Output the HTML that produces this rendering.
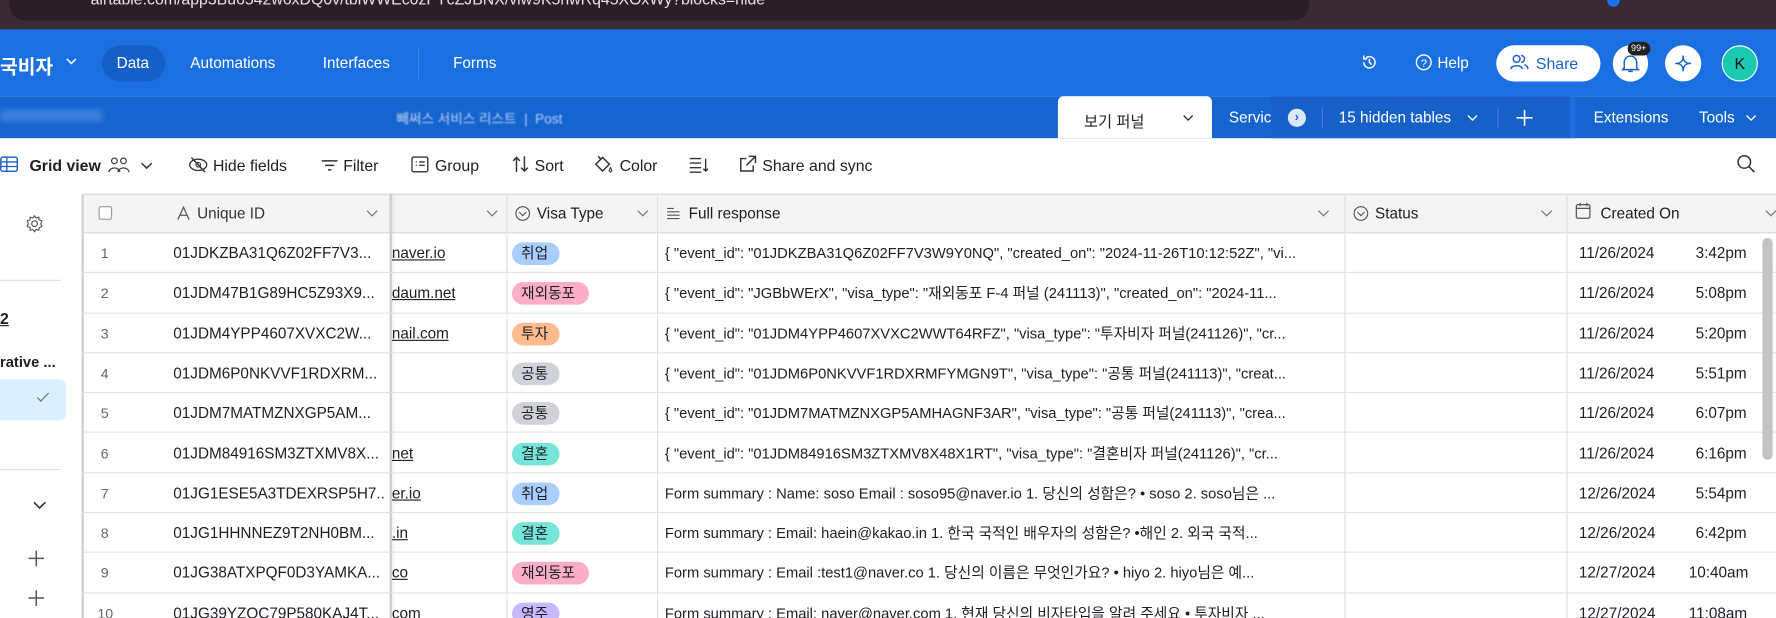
<!DOCTYPE html>
<html><head><meta charset="utf-8"><style>
*{box-sizing:border-box;margin:0;padding:0}
html,body{width:1776px;height:618px;overflow:hidden;background:#fff}
#wrap{position:absolute;left:0;top:0;width:1568px;height:546px;overflow:hidden;transform:scale(1.13266);transform-origin:0 0;font-family:"Liberation Sans","Noto Sans CJK KR",sans-serif;color:#1d1f25}
.a{position:absolute;white-space:nowrap}
.top{left:0;top:0;width:1568px;height:26px;background:#3a2a34}
.url{left:8px;top:-11px;width:1148px;height:29px;border-radius:14px;background:#2a1e27;color:#e8e2e6;font-size:14px;padding:1px 0 0 72px;line-height:18px}
.hdr{left:0;top:26px;width:1568px;height:59px;background:#1a70e1}
.tabs{left:0;top:85px;width:1568px;height:37px;background:#1564d0}
.w{color:#fff;font-size:13.5px}
.tb{font-size:14px;color:#1d1f25}
.hd{left:0;top:171px;width:1568px;height:35px;background:#f4f4f4;border-top:1px solid #d6d6d6;border-bottom:1px solid #dcdcdc}
.row{left:73px;width:1495px;height:35.3px;border-bottom:1px solid #e2e2e2}
.c{position:absolute;font-size:13px;line-height:16px;height:17px;color:#1d1f25;white-space:nowrap;overflow:hidden}
.pill{position:absolute;height:20px;border-radius:10px;font-size:13px;padding:0 8px;line-height:20px;color:#1d1f25;overflow:hidden}
.vl{position:absolute;top:171px;width:1px;height:400px;background:#e0e0e0}
.ci{display:inline-block;width:13px;height:13px;border:1.3px solid #555;border-radius:50%;vertical-align:-2px;margin-right:6px;position:relative}
.ci:after{content:"";position:absolute;left:3px;top:2px;width:4px;height:4px;border-right:1.2px solid #555;border-bottom:1.2px solid #555;transform:rotate(45deg)}
svg{position:absolute}
</style></head><body><div id="wrap">
<div class="a top"></div>
<div class="a url">airtable.com/app3Bu6542w6xDQ0v/tblWWEc0zFYcZJBNX/viw9K5nwRq45XOxWy?blocks=hide</div>
<div class="a" style="left:1419px;top:0;width:11px;height:6px;border-radius:0 0 6px 6px;background:#1a73e8"></div>
<div class="a hdr"></div>
<div class="a w" style="left:0;top:45px;font-size:17px;font-weight:bold">국비자</div>
<svg style="left:58px;top:50px" width="10" height="8"><path d="M1 2l4 4 4-4" stroke="#fff" stroke-width="1.3" fill="none"/></svg>
<div class="a" style="left:90px;top:40px;width:56px;height:32px;border-radius:16px;background:#1460c6"></div>
<div class="a w" style="left:103px;top:48px">Data</div>
<div class="a w" style="left:168px;top:48px">Automations</div>
<div class="a w" style="left:285px;top:48px">Interfaces</div>
<div class="a" style="left:369px;top:42px;width:1px;height:28px;background:#3d86e6"></div>
<div class="a w" style="left:400px;top:48px">Forms</div>
<svg style="left:1201px;top:47px" width="16" height="16"><path d="M3 8a5 5 0 1 0 2-4M3 2v3h3M8 5v3l2 2" stroke="#fff" stroke-width="1.3" fill="none"/></svg>
<svg style="left:1249px;top:47px" width="16" height="16"><circle cx="8" cy="8" r="6.5" stroke="#fff" stroke-width="1.2" fill="none"/><text x="5.3" y="12" fill="#fff" font-size="10" font-family="Liberation Sans">?</text></svg>
<div class="a w" style="left:1269px;top:48px">Help</div>
<div class="a" style="left:1321px;top:40px;width:92px;height:32px;border-radius:16px;background:#fff"></div>
<svg style="left:1333px;top:47px" width="18" height="16"><circle cx="6" cy="5" r="3" stroke="#1a62c8" stroke-width="1.3" fill="none"/><path d="M1 14c0-4 10-4 10 0M10 2a3 3 0 0 1 0 6M13 10c2 1 3 2 3 4" stroke="#1a62c8" stroke-width="1.3" fill="none"/></svg>
<div class="a" style="left:1356px;top:48px;color:#1a62c8;font-size:14px">Share</div>
<div class="a" style="left:1424px;top:40px;width:31px;height:32px;border-radius:16px;background:#fff"></div>
<svg style="left:1431px;top:47px" width="17" height="18"><path d="M3 13V8a5.5 5.5 0 0 1 11 0v5l1.5 1.5h-14zM6.5 16h4" stroke="#1a62c8" stroke-width="1.3" fill="none"/></svg>
<div class="a" style="left:1437px;top:37px;height:12px;padding:0 3px;border-radius:6px;background:#222;color:#fff;font-size:8px;line-height:12px">99+</div>
<div class="a" style="left:1470px;top:40px;width:32px;height:32px;border-radius:16px;background:#fff"></div>
<svg style="left:1478px;top:48px" width="16" height="16"><path d="M8 1C8 6 10 8 15 8 10 8 8 10 8 15 8 10 6 8 1 8 6 8 8 6 8 1z" stroke="#1a62c8" stroke-width="1.3" fill="none"/></svg>
<div class="a" style="left:1520px;top:40px;width:32px;height:32px;border-radius:16px;background:#1bc8b0;border:1px solid #fff;color:#111;text-align:center;font-size:14px;line-height:30px">K</div>
<div class="a tabs"></div>
<div class="a" style="left:0;top:97px;width:90px;height:10px;background:#6aa0ea;opacity:.5;filter:blur(3px)"></div>
<div class="a w" style="left:350px;top:96px;font-size:12px;opacity:.7;filter:blur(.8px)">빼써스 서비스 리스트 &nbsp;| &nbsp;Post</div>
<div class="a" style="left:934px;top:85px;width:136px;height:37px;background:#fff;border-radius:5px 5px 0 0"></div>
<div class="a tb" style="left:957px;top:96px;font-size:13.5px">보기 퍼널</div>
<svg style="left:1044px;top:100px" width="10" height="8"><path d="M1 2l4 4 4-4" stroke="#333" stroke-width="1.2" fill="none"/></svg>
<div class="a w" style="left:1085px;top:96px">Servic</div>
<div class="a" style="left:1122px;top:85px;width:264px;height:37px;background:#1660c8"></div>
<div class="a" style="left:1137px;top:96px;width:16px;height:16px;border-radius:8px;background:#dce8fb;color:#1560cc;font-size:11px;text-align:center;line-height:16px;font-weight:bold">›</div>
<div class="a" style="left:1167px;top:95px;width:1px;height:18px;background:#3d80de"></div>
<div class="a w" style="left:1182px;top:96px">15 hidden tables</div>
<svg style="left:1295px;top:100px" width="10" height="8"><path d="M1 2l4 4 4-4" stroke="#fff" stroke-width="1.2" fill="none"/></svg>
<div class="a" style="left:1322px;top:95px;width:1px;height:18px;background:#3d80de"></div>
<svg style="left:1338px;top:96px" width="16" height="16"><path d="M8 1v14M1 8h14" stroke="#fff" stroke-width="1.4"/></svg>
<div class="a" style="left:1386px;top:85px;width:5px;height:37px;background:#1a70e1"></div>
<div class="a w" style="left:1407px;top:96px">Extensions</div>
<div class="a w" style="left:1500px;top:96px">Tools</div>
<svg style="left:1541px;top:100px" width="10" height="8"><path d="M1 2l4 4 4-4" stroke="#fff" stroke-width="1.2" fill="none"/></svg>
<!-- toolbar -->
<svg style="left:0;top:138px" width="16" height="14"><rect x="0.7" y="0.7" width="14.6" height="12.6" rx="2" stroke="#1a62c8" stroke-width="1.3" fill="none"/><path d="M1 5h14M1 9h14M6 1v12" stroke="#1a62c8" stroke-width="1.2"/></svg>
<div class="a tb" style="left:26px;top:138px;font-weight:bold">Grid view</div>
<svg style="left:95px;top:138px" width="20" height="15"><circle cx="6" cy="4" r="2.5" stroke="#333" fill="none"/><circle cx="14" cy="4" r="2.5" stroke="#333" fill="none"/><path d="M1 14c1-5 9-5 10 0M9 14c1-5 9-5 10 0" stroke="#333" fill="none"/></svg>
<svg style="left:124px;top:142px" width="11" height="8"><path d="M1 2l4.5 4.5L10 2" stroke="#333" stroke-width="1.3" fill="none"/></svg>
<svg style="left:166px;top:138px" width="18" height="15"><ellipse cx="9" cy="7.5" rx="7.5" ry="5" stroke="#333" stroke-width="1.2" fill="none"/><circle cx="9" cy="7.5" r="2" stroke="#333" fill="none"/><path d="M3 1l12 13" stroke="#333" stroke-width="1.3"/></svg>
<div class="a tb" style="left:188px;top:138px">Hide fields</div>
<svg style="left:283px;top:140px" width="16" height="12"><path d="M1 2h14M4 6h8M6.5 10h3" stroke="#333" stroke-width="1.3"/></svg>
<div class="a tb" style="left:303px;top:138px">Filter</div>
<svg style="left:363px;top:138px" width="16" height="15"><rect x="0.7" y="0.7" width="14" height="13" rx="1.5" stroke="#333" stroke-width="1.2" fill="none"/><path d="M4 5h1M7 5h5M4 8h1M7 8h5" stroke="#333" stroke-width="1.2"/></svg>
<div class="a tb" style="left:384px;top:138px">Group</div>
<svg style="left:452px;top:137px" width="16" height="16"><path d="M4 15V2M1 5l3-3 3 3M11 1v13M8 11l3 3 3-3" stroke="#333" stroke-width="1.3" fill="none"/></svg>
<div class="a tb" style="left:472px;top:138px">Sort</div>
<svg style="left:524px;top:137px" width="18" height="17"><path d="M2 8l6-6 6 6-6 6z" stroke="#333" stroke-width="1.3" fill="none"/><path d="M4 1l3 3" stroke="#333" stroke-width="1.3"/><path d="M15 11c1 2 2 3 0 4-2-1-1-2 0-4z" stroke="#333" fill="none"/></svg>
<div class="a tb" style="left:547px;top:138px">Color</div>
<svg style="left:608px;top:138px" width="18" height="15"><path d="M1 2h10M1 6h10M1 10h10M1 14h10M15 2v11M13 11l2 2 2-2" stroke="#333" stroke-width="1.2" fill="none"/></svg>
<svg style="left:652px;top:137px" width="16" height="16"><path d="M7 3H2v11h11V9M9 1h6v6M15 1L7 9" stroke="#333" stroke-width="1.3" fill="none"/></svg>
<div class="a tb" style="left:673px;top:138px">Share and sync</div>
<svg style="left:1533px;top:136px" width="17" height="18"><circle cx="7" cy="7" r="5.5" stroke="#333" stroke-width="1.3" fill="none"/><path d="M11 11l5 5" stroke="#333" stroke-width="1.4"/></svg>
<!-- sidebar -->
<svg style="left:22px;top:189px" width="17" height="17"><circle cx="8.5" cy="8.5" r="2.5" stroke="#555" fill="none"/><path d="M8.5 1.5l1.5 2 2.3-.8.3 2.4 2.4.9-1 2.5 1 2.5-2.4.9-.3 2.4-2.3-.8-1.5 2-1.5-2-2.3.8-.3-2.4-2.4-.9 1-2.5-1-2.5 2.4-.9.3-2.4 2.3.8z" stroke="#555" fill="none"/></svg>
<div class="a" style="left:0;top:247px;width:54px;height:1px;background:#e0e0e0"></div>
<div class="a" style="left:0;top:273px;font-size:14px;font-weight:bold;text-decoration:underline">2</div>
<div class="a" style="left:0;top:312px;font-size:13px;font-weight:bold">rative ...</div>
<div class="a" style="left:0;top:335px;width:58px;height:36px;background:#dbeefc;border-radius:0 5px 5px 0"></div>
<svg style="left:32px;top:346px" width="12" height="10"><path d="M1 5l3 3 7-7" stroke="#777" stroke-width="1.1" fill="none"/></svg>
<div class="a" style="left:0;top:414px;width:54px;height:1px;background:#e0e0e0"></div>
<svg style="left:29px;top:442px" width="12" height="8"><path d="M1 1.5l5 5 5-5" stroke="#333" stroke-width="1.4" fill="none"/></svg>
<svg style="left:25px;top:486px" width="14" height="14"><path d="M7 0v14M0 7h14" stroke="#555" stroke-width="1.3"/></svg>
<svg style="left:25px;top:521px" width="14" height="14"><path d="M7 0v14M0 7h14" stroke="#555" stroke-width="1.3"/></svg>
<div class="a" style="left:72px;top:171px;width:2px;height:400px;background:#cfcfcf"></div>
<!-- header -->
<div class="a hd" style="left:74px"></div>
<div class="a" style="left:87px;top:182px;width:12px;height:12px;border:1px solid #999;border-radius:2px;background:#fff"></div>
<svg style="left:156px;top:182px" width="12" height="12"><path d="M1 12L6 1l5 11M3 8h6" stroke="#555" stroke-width="1.1" fill="none"/></svg>
<div class="c" style="left:174px;top:181px;color:#333;font-size:13.5px">Unique ID</div>
<div id="hc"></div>
<div class="c" style="left:455px;top:181px;font-size:13.5px"><span class="ci"></span>Visa Type</div>
<svg style="left:588px;top:183px" width="13" height="11"><path d="M1 1h6M1 4h11M1 7h11M1 10h11" stroke="#555" stroke-width="1"/></svg>
<div class="c" style="left:608px;top:181px;font-size:13.5px">Full response</div>
<div class="c" style="left:1195px;top:181px;font-size:13.5px"><span class="ci"></span>Status</div>
<svg style="left:1391px;top:178px" width="15" height="17"><rect x="0.7" y="2.7" width="12" height="12" rx="1.5" stroke="#555" stroke-width="1.1" fill="none"/><path d="M1 6h12M4 1v3M10 1v3" stroke="#555" stroke-width="1.1"/></svg>
<div class="c" style="left:1413px;top:181px;font-size:13.5px">Created On</div>
<div class="vl" style="left:447px"></div><div class="vl" style="left:580px"></div><div class="vl" style="left:1187px"></div><div class="vl" style="left:1383px"></div>
<div class="a" style="left:344px;top:171px;width:2px;height:400px;background:#cfcfcf;box-shadow:1px 0 3px rgba(0,0,0,.1)"></div>
<div id="rows"></div>
<div class="a" style="left:1556px;top:210px;width:9px;height:196px;border-radius:5px;background:#c4c4c4"></div>
</div>
<script>
var hc="";[323,429,562,1163,1360,1558].forEach(function(x){hc+='<svg style="left:'+x+'px;top:185px" width="11" height="7"><path d="M1 1l4.5 4.5L10 1" stroke="#777" stroke-width="1.1" fill="none"/></svg>';});
document.getElementById("hc").innerHTML=hc;
var d=[
["01JDKZBA31Q6Z02FF7V3...","naver.io","취업","#a9cdfc",'{ "event_id": "01JDKZBA31Q6Z02FF7V3W9Y0NQ", "created_on": "2024-11-26T10:12:52Z", "vi...',"11/26/2024","3:42pm"],
["01JDM47B1G89HC5Z93X9...","daum.net","재외동포","#fcaec8",'{ "event_id": "JGBbWErX", "visa_type": "재외동포 F-4 퍼널 (241113)", "created_on": "2024-11...',"11/26/2024","5:08pm"],
["01JDM4YPP4607XVXC2W...","nail.com","투자","#fdbb8e",'{ "event_id": "01JDM4YPP4607XVXC2WWT64RFZ", "visa_type": "투자비자 퍼널(241126)", "cr...',"11/26/2024","5:20pm"],
["01JDM6P0NKVVF1RDXRM...","","공통","#cfd2d6",'{ "event_id": "01JDM6P0NKVVF1RDXRMFYMGN9T", "visa_type": "공통 퍼널(241113)", "creat...',"11/26/2024","5:51pm"],
["01JDM7MATMZNXGP5AM...","","공통","#cfd2d6",'{ "event_id": "01JDM7MATMZNXGP5AMHAGNF3AR", "visa_type": "공통 퍼널(241113)", "crea...',"11/26/2024","6:07pm"],
["01JDM84916SM3ZTXMV8X...","net","결혼","#74e5d8",'{ "event_id": "01JDM84916SM3ZTXMV8X48X1RT", "visa_type": "결혼비자 퍼널(241126)", "cr...',"11/26/2024","6:16pm"],
["01JG1ESE5A3TDEXRSP5H7...","er.io","취업","#a9cdfc","Form summary : Name: soso Email : soso95@naver.io 1. 당신의 성함은? • soso 2. soso님은 ...","12/26/2024","5:54pm"],
["01JG1HHNNEZ9T2NH0BM...",".in","결혼","#74e5d8","Form summary : Email: haein@kakao.in 1. 한국 국적인 배우자의 성함은? •해인 2. 외국 국적...","12/26/2024","6:42pm"],
["01JG38ATXPQF0D3YAMKA...","co","재외동포","#fcaec8","Form summary : Email :test1@naver.co 1. 당신의 이름은 무엇인가요? • hiyo 2. hiyo님은 예...","12/27/2024","10:40am"],
["01JG39YZQC79P580KAJ4T...","com","영주","#c9b8fb","Form summary : Email: naver@naver.com 1. 현재 당신의 비자타입을 알려 주세요 • 투자비자 ...","12/27/2024","11:08am"]];
var h="";
d.forEach(function(r,i){var y=206+i*35.3,t=y+10;
h+='<div class="a row" style="top:'+y+'px"></div>';
h+='<div class="c" style="left:'+(i<9?89:86)+'px;top:'+t+'px;color:#666;font-size:12.5px">'+(i+1)+'</div>';
h+='<div class="c" style="left:153px;top:'+t+'px;width:188px;font-size:13.5px">'+r[0]+'</div>';
h+='<div class="c" style="left:346px;top:'+t+'px;text-decoration:underline;font-size:13.5px">'+r[1]+'</div>';
var pw=r[2].length*13+16;
h+='<div class="pill" style="left:452px;top:'+(y+8)+'px;width:'+pw+'px;background:'+r[3]+'">'+r[2]+'</div>';
h+='<div class="c" style="left:587px;top:'+t+'px;width:590px">'+r[4]+'</div>';
h+='<div class="c" style="left:1394px;top:'+t+'px;font-size:13.5px">'+r[5]+'</div>';
h+='<div class="c" style="left:'+(r[6].length>6?1491:1497)+'px;top:'+t+'px;font-size:13.5px">'+r[6]+'</div>';});
document.getElementById("rows").innerHTML=h;
</script>
</body></html>
